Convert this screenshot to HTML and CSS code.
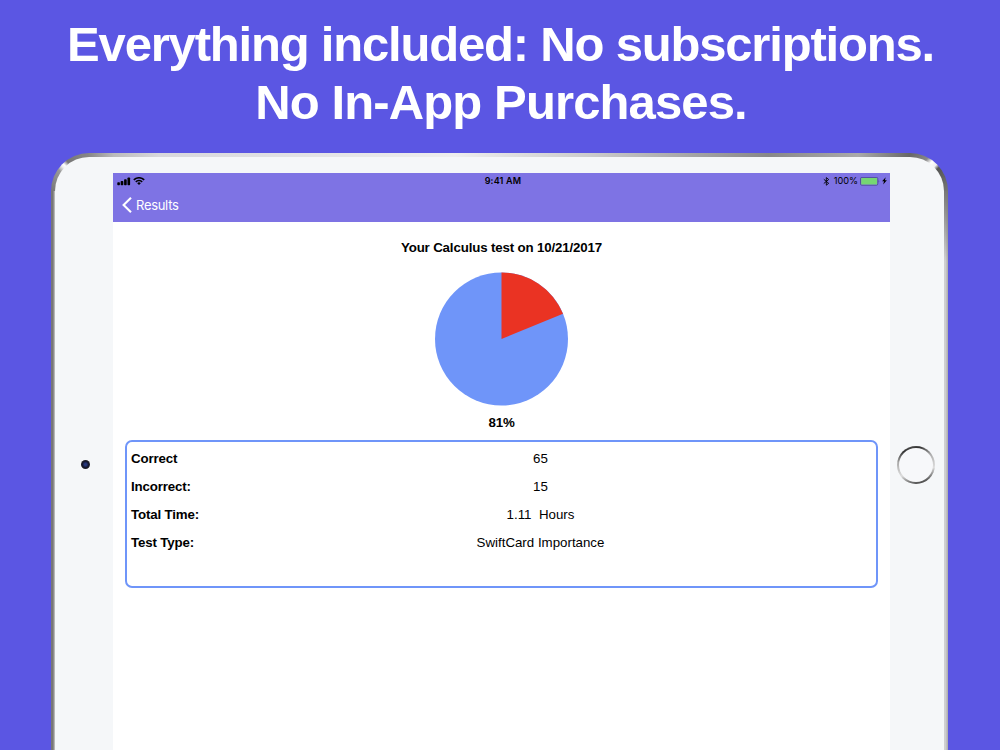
FILE: index.html
```html
<!DOCTYPE html>
<html lang="en">
<head>
    <meta charset="UTF-8">
    <meta name="viewport" content="width=device-width, initial-scale=1.0">
    <title>Everything included</title>
    <link rel="stylesheet" href="styles.css">
</head>
<body>
    <h1 class="headline">
        <span class="line-one">Everything included: No subscriptions.</span>
        <span class="line-two">No In-App Purchases.</span>
    </h1>

    <div class="tablet">
        <div class="bezel">
            <div class="bezel-side bezel-left">
                <div class="camera"></div>
            </div>

            <div class="screen">
                <div class="status-bar">
                    <div class="status-left">
                        <svg width="14" height="9" viewBox="0 0 14 9">
                            <rect x="0.3" y="5.2" width="2.6" height="3" rx="0.7"/>
                            <rect x="3.7" y="4" width="2.6" height="4.2" rx="0.7"/>
                            <rect x="7.1" y="2.3" width="2.6" height="5.9" rx="0.7"/>
                            <rect x="10.5" y="0.5" width="2.6" height="7.7" rx="0.7"/>
                        </svg>
                        <svg width="12" height="9" viewBox="0 0 12 9">
                            <path d="M0.8 2.9a7.4 7.4 0 0 1 10.4 0" fill="none" stroke="#000" stroke-width="1.6"/>
                            <path d="M2.8 4.9a4.5 4.5 0 0 1 6.4 0" fill="none" stroke="#000" stroke-width="1.5"/>
                            <path d="M6 8L4.2 6.2a2.6 2.6 0 0 1 3.6 0z"/>
                        </svg>
                    </div>
                    <div class="clock">9:41 AM</div>
                    <div class="status-right">
                        <svg class="bluetooth" width="7" height="9" viewBox="0 0 7 9">
                            <path d="M0.8 2.3L5.7 6.3L3.3 8.2V0.6L5.7 2.5L0.8 6.5" fill="none" stroke="#000" stroke-width="0.9"/>
                        </svg>
                        <span class="percent">100%</span>
                        <svg class="battery" width="20" height="9" viewBox="0 0 20 9">
                            <rect x="0.5" y="0.4" width="17.3" height="7.8" rx="1.3" fill="none" stroke="#48448a" stroke-width="0.8"/>
                            <rect x="1.2" y="1.1" width="15.9" height="6.4" rx="0.4" fill="#76d672"/>
                            <path d="M18.6 3.1q1.3 1.3 0 2.6z" fill="#48448a"/>
                        </svg>
                        <svg class="bolt" width="5" height="8" viewBox="0 0 5 8">
                            <path d="M3.7 0.2L0.1 4.3H2L1.2 7.6L4.9 3.3H2.9z"/>
                        </svg>
                    </div>
                </div>

                <div class="nav-bar">
                    <svg width="10" height="16" viewBox="0 0 10 16">
                        <path d="M9 0.8L1.6 8L9 15.2" fill="none" stroke="#fff" stroke-width="2.1"/>
                    </svg>
                    <span class="back">Results</span>
                </div>

                <div class="content">
                    <div class="test-title">Your Calculus test on 10/21/2017</div>
                    <svg class="pie" width="133" height="134" viewBox="-66.5 -67 133 134">
                        <circle r="66.5" fill="#6f95f9"/>
                        <path d="M0 0V-66.5A66.5 66.5 0 0 1 61.5 -25.3z" fill="#ea3323"/>
                    </svg>
                    <div class="score">81%</div>

                    <div class="details">
                        <div class="row">
                            <span class="label">Correct</span>
                            <span class="value">65</span>
                        </div>
                        <div class="row">
                            <span class="label">Incorrect:</span>
                            <span class="value">15</span>
                        </div>
                        <div class="row">
                            <span class="label">Total Time:</span>
                            <span class="value">1.11&nbsp; Hours</span>
                        </div>
                        <div class="row">
                            <span class="label">Test Type:</span>
                            <span class="value">SwiftCard Importance</span>
                        </div>
                    </div>
                </div>
            </div>

            <div class="bezel-side bezel-right">
                <div class="home-button"></div>
            </div>
        </div>
    </div>
</body>
</html>
```
FILE: styles.css
```css
* {
    box-sizing: border-box;
}

body {
    margin: 0;
    height: 750px;
    overflow: hidden;
    background-color: #5b56e3;
    font-family: "Liberation Sans", Arial, sans-serif;
    color: #000;
}

.headline {
    margin: 0;
    height: 153px;
    padding: 15px 0 0 1px;
    color: #fff;
    font-size: 49px;
    line-height: 58px;
    text-align: center;
}

.headline span {
    display: block;
    white-space: nowrap;
}

.line-one {
    letter-spacing: -1.19px;
}

.line-two {
    padding-left: 1px;
    letter-spacing: -0.87px;
}

/* metal edge around the tablet */
.tablet {
    width: 897px;
    height: 620px;
    margin-left: 51px;
    padding: 4px 4px 0;
    border-radius: 38px 38px 0 0;
    background:
        linear-gradient(45deg, #777, #999 38%, #eee 47%, #fff 52%, #777 60%, #888) 0 0 / 38px 38px no-repeat,
        linear-gradient(135deg, #666, #888 30%, #fff 40%, #eee 50%, #555 57%, #777) 100% 0 / 38px 38px no-repeat,
        linear-gradient(90deg, #888 38px, #bbb 7%, #d8d8dc 12%, #eee 45%, #ccc 60%, #888 80%, #aaa 90%, #666 859px) 0 0 / 100% 38px no-repeat,
        linear-gradient(#777, transparent 70px) 100% 38px / 4px 80px no-repeat,
        linear-gradient(90deg, #777 0, #777 2px, #ccc 4px, #ccc 893px, #d4d4d8 894px, #aaa 897px);
}

.bezel {
    display: flex;
    height: 100%;
    padding-top: 16px;
    border-radius: 34px 34px 0 0;
    background-color: #f5f7f9;
}

.bezel-side {
    display: flex;
    justify-content: center;
}

.bezel-left {
    width: 58px;
    padding-top: 287px;
}

.bezel-right {
    width: 54px;
    padding-top: 273px;
}

.camera {
    width: 9px;
    height: 9px;
    margin-left: 3px;
    border-radius: 50%;
    background: radial-gradient(#26387c 15%, #14162c 50%, #222 75%);
}

.home-button {
    width: 38px;
    height: 38px;
    margin-right: 2px;
    padding: 2px;
    border-radius: 50%;
    background: linear-gradient(165deg, #777 0, #333 15%, #aaa 35%, #ddd 65%, #555 88%, #333);
}

.home-button::before {
    content: "";
    display: block;
    height: 34px;
    border-radius: 50%;
    background-color: #f7f8fa;
}

.screen {
    width: 777px;
    background-color: #fff;
}

.status-bar {
    display: grid;
    grid-template-columns: 1fr auto 1fr;
    align-items: center;
    height: 16px;
    padding: 0 3px 0 4px;
    background-color: #7e73e4;
    font-family: Inter, sans-serif;
    font-size: 9.2px;
    line-height: 14px;
}

.status-left,
.status-right {
    display: flex;
    align-items: center;
    gap: 2px;
}

.status-right {
    justify-content: flex-end;
}

.percent {
    margin: 0 0 0 2px;
}

.clock {
    padding: 0 0 1px 2px;
    font-weight: 600;
    font-size: 9px;
    letter-spacing: 0.2px;
}

.nav-bar {
    display: flex;
    align-items: center;
    gap: 4px;
    height: 33px;
    padding-left: 9px;
    padding-bottom: 1px;
    background-color: #7e73e4;
    color: #fff;
    font-family: Inter, sans-serif;
    font-size: 13px;
    letter-spacing: -0.3px;
}

.content {
    display: flex;
    flex-direction: column;
    align-items: center;
    padding: 18px 12px 0;
    font-size: 13.3px;
    line-height: 16px;
}

.test-title,
.score,
.label {
    font-weight: bold;
    letter-spacing: -0.15px;
}

.pie {
    margin-top: 16px;
}

.score {
    margin-top: 9px;
}

.details {
    width: 753px;
    height: 148px;
    margin-top: 9px;
    padding: 3px 4px 0;
    border: 2px solid #6f95f9;
    border-radius: 7px;
}

.row {
    display: grid;
    grid-template-columns: 78px 663px;
    align-items: center;
    height: 28.1px;
}

.label {
    white-space: nowrap;
}

.value {
    text-align: center;
}
```
